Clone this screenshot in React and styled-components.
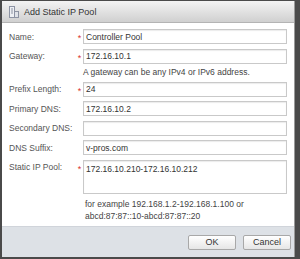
import React from "react";
import styled, { createGlobalStyle } from "styled-components";

const Global = createGlobalStyle`
  html, body { margin: 0; padding: 0; }
  body {
    width: 300px; height: 259px; overflow: hidden;
    background: #4a4a4a;
    font-family: "Liberation Sans", Arial, sans-serif;
  }
`;

const Dialog = styled.div`
  margin: 1px 0 0 2px;
  width: 293px;
  height: 256px;
  display: flex;
  flex-direction: column;
  background: #ffffff;
  box-sizing: border-box;
  border-right: 1px solid #9a9a9a;
`;

const TitleBar = styled.div`
  height: 21px;
  flex: none;
  display: flex;
  align-items: center;
  gap: 5px;
  padding-left: 7px;
  background: linear-gradient(#f3f3f3, #d0d0d0);
  border-bottom: 1px solid #b4b4b4;
  font-size: 9px;
  color: #333;
`;

const Body = styled.div`
  flex: 1;
  min-height: 0;
  padding: 6px 8px 0 7px;
  display: grid;
  grid-template-columns: 67px 7px 204px;
  grid-auto-rows: auto;
  row-gap: 4.5px;
  align-content: start;
`;

const Label = styled.div`
  height: 15px;
  display: flex;
  align-items: center;
  font-size: 8.5px;
  color: #555;
`;

const Req = styled.div`
  height: 15px;
  display: flex;
  align-items: center;
  justify-content: center;
  padding-top: 3px;
  box-sizing: border-box;
  font-size: 9px;
  color: #d9342b;
`;

const Field = styled.div`
  height: ${(p) => (p.$tall ? 34 : 15)}px;
  box-sizing: border-box;
  border: 1px solid #c9c9c9;
  box-shadow: inset 0 1px 1px #ececec;
  padding: ${(p) => (p.$tall ? "3px 2px" : "0 2px")};
  display: flex;
  align-items: ${(p) => (p.$tall ? "flex-start" : "center")};
  font-size: 8.5px;
  color: #333;
  background: #fff;
`;

const Hint = styled.div`
  grid-column: 3;
  font-size: 8.5px;
  color: #444;
  line-height: ${(p) => p.$lh || 12}px;
  padding: ${(p) => p.$pad || "0"};
`;

const Footer = styled.div`
  height: 30px;
  flex: none;
  background: #dde1e6;
  border-top: 1px solid #d0d4da;
  display: flex;
  justify-content: flex-end;
  align-items: center;
  gap: 7px;
  padding-right: 3px;
`;

const Button = styled.div`
  width: 48px;
  height: 15px;
  box-sizing: border-box;
  border: 1px solid #a8a8a8;
  border-radius: 2px;
  background: linear-gradient(#ffffff, #e6e6e6);
  display: flex;
  align-items: center;
  justify-content: center;
  font-size: 9px;
  color: #333;
`;

const PoolIcon = () => (
  <svg width="10" height="12" viewBox="0 0 10 12">
    <rect x="0.5" y="0.5" width="5" height="11" fill="#eef0f4" stroke="#8d93a3" />
    <rect x="5.5" y="5.5" width="4" height="6" fill="#dfe2e8" stroke="#8d93a3" />
    <line x1="2" y1="3" x2="4" y2="3" stroke="#8d93a3" />
    <line x1="2" y1="5" x2="4" y2="5" stroke="#8d93a3" />
    <line x1="2" y1="7" x2="4" y2="7" stroke="#8d93a3" />
  </svg>
);

const rows = [
  { label: "Name:", req: true, value: "Controller Pool" },
  { label: "Gateway:", req: true, value: "172.16.10.1", hint: "A gateway can be any IPv4 or IPv6 address." },
  { label: "Prefix Length:", req: true, value: "24" },
  { label: "Primary DNS:", value: "172.16.10.2" },
  { label: "Secondary DNS:", value: "" },
  { label: "DNS Suffix:", value: "v-pros.com" },
  { label: "Static IP Pool:", req: true, value: "172.16.10.210-172.16.10.212", tall: true },
];

export default function App() {
  return (
    <>
      <Global />
      <Dialog>
        <TitleBar>
          <PoolIcon />
          <span>Add Static IP Pool</span>
        </TitleBar>
        <Body>
          {rows.map((r) => (
            <React.Fragment key={r.label}>
              <Label>{r.label}</Label>
              <Req>{r.req ? "*" : ""}</Req>
              <Field $tall={r.tall}>{r.value}</Field>
              {r.hint && <Hint $lh={9}>{r.hint}</Hint>}
            </React.Fragment>
          ))}
          <Hint $pad="0 0 0 2px">
            for example 192.168.1.2-192.168.1.100 or
            <br />
            abcd:87:87::10-abcd:87:87::20
          </Hint>
        </Body>
        <Footer>
          <Button>OK</Button>
          <Button>Cancel</Button>
        </Footer>
      </Dialog>
    </>
  );
}
